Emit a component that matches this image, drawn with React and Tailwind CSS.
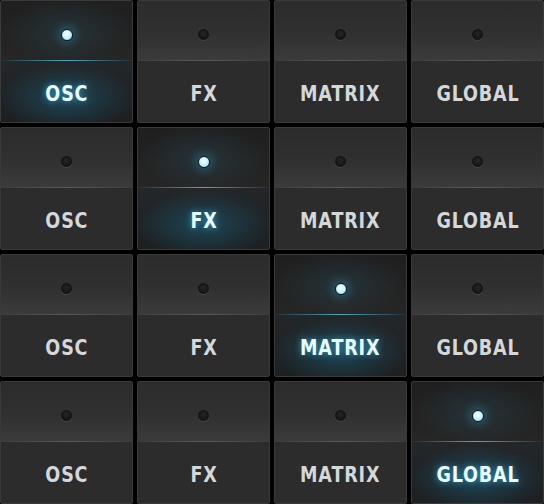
import React from "react";

const rows = ["OSC", "FX", "MATRIX", "GLOBAL"];
const labels = ["OSC", "FX", "MATRIX", "GLOBAL"];

function Led({ on }) {
  if (on) {
    return (
      <div className="w-[12px] h-[12px] rounded-full border border-[#0d1a1e] bg-[radial-gradient(circle_at_45%_40%,#ffffff_0%,#c9f5ff_45%,#8fdcef_100%)] shadow-[0_0_10px_3px_rgba(70,180,220,0.3)]" />
    );
  }
  return (
    <div className="w-[11px] h-[11px] rounded-full border border-[#121212] bg-[radial-gradient(circle_at_50%_40%,#262626_0%,#161616_70%)] shadow-[0_1px_0_rgba(255,255,255,0.08)]" />
  );
}

function Pad({ label, on }) {
  return (
    <div
      className={
        "flex flex-col h-[123px] border border-[#3a3a3a] rounded-[2px] overflow-hidden " +
        (on ? "bg-[#222324]" : "bg-[#2d2d2d]")
      }
    >
      <div
        className={
          "h-[59px] flex justify-center pt-[28px] " +
          (on
            ? "bg-[radial-gradient(ellipse_60%_70%_at_50%_50%,rgba(40,110,135,0.22),transparent_80%),linear-gradient(to_bottom,#1f1f1f,#262626)]"
            : "bg-[linear-gradient(to_bottom,#2c2c2c_0%,#303030_55%,#3b3b3b_100%)]")
        }
      >
        <Led on={on} />
      </div>
      <div
        className={
          "h-px " +
          (on
            ? "bg-[linear-gradient(to_right,rgba(40,100,120,0.2),#4aa9c6_50%,rgba(40,100,120,0.2))]"
            : "bg-[linear-gradient(to_right,#3c3c3c,#5a5a5a_50%,#3c3c3c)]")
        }
      />
      <div
        className={
          "flex-1 flex items-center justify-center pt-1 " +
          (on
            ? "bg-[radial-gradient(ellipse_60%_65%_at_50%_60%,rgba(25,105,135,0.5),transparent_85%),linear-gradient(to_bottom,#23272a,#1d2022)]"
            : "bg-[#2c2c2c]")
        }
      >
        <span
          className={
            "inline-block scale-x-[0.8] font-['DejaVu_Sans',sans-serif] font-bold text-[22px] tracking-[1px] leading-none " +
            (on
              ? "text-[#e8fbff] [text-shadow:0_0_8px_rgba(70,190,235,0.75)]"
              : "text-[#d4d8da]")
          }
        >
          {label}
        </span>
      </div>
    </div>
  );
}

export default function App() {
  return (
    <div className="w-[544px] h-[504px] bg-black grid grid-cols-4 grid-rows-4 gap-1">
      {rows.map((active, r) =>
        labels.map((l) => <Pad key={r + l} label={l} on={l === active} />)
      )}
    </div>
  );
}
